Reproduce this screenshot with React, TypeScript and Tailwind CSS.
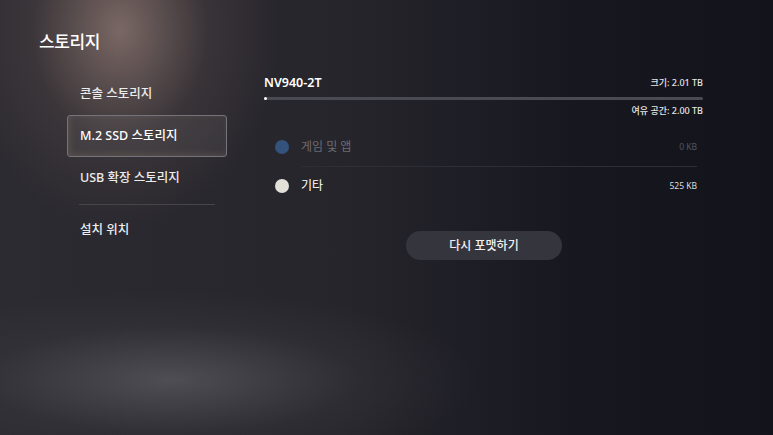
import React from "react";

const menu = [
  { label: "콘솔 스토리지", active: false },
  { label: "M.2 SSD 스토리지", active: true },
  { label: "USB 확장 스토리지", active: false },
];

const rows = [
  { label: "게임 및 앱", size: "0 KB", dot: "bg-[#34527c]", dim: true },
  { label: "기타", size: "525 KB", dot: "bg-[#e3e0da]", dim: false },
];

export default function App() {
  return (
    <div
      className="relative w-[773px] h-[435px] overflow-hidden bg-[#15151f] text-white"
      style={{ fontFamily: '"Noto Sans", "Noto Sans CJK KR", sans-serif' }}
    >
      {/* background lights */}
      <div className="absolute inset-0 bg-[linear-gradient(90deg,#2c2b31_0%,#26252c_45%,#17171f_75%,#13131c_100%)]" />
      <div className="absolute -top-[170px] -left-[40px] w-[320px] h-[400px] rounded-full bg-[radial-gradient(closest-side,rgba(175,145,135,0.6),rgba(100,82,80,0.28)_55%,rgba(0,0,0,0))]" />
      <div className="absolute top-[290px] -left-[140px] w-[620px] h-[180px] rounded-full bg-[radial-gradient(closest-side,rgba(115,115,122,0.5),rgba(72,70,78,0.22)_60%,rgba(0,0,0,0))]" />

      <div className="relative">
        <h1 className="pl-[39px] pt-[30px] text-[17px] leading-[24px] font-medium tracking-tight">
          스토리지
        </h1>

        <div className="flex pt-[19px]">
          {/* left menu */}
          <div className="ml-[67px] w-[160px] flex flex-col">
            {menu.map((m) => (
              <div
                key={m.label}
                className={
                  m.active
                    ? "h-[42px] flex items-center pl-[12px] rounded-[3px] border border-[#74727a] bg-[rgba(255,255,255,0.06)] shadow-[inset_2px_-2px_6px_rgba(200,160,130,0.18)] text-[12.5px] font-medium"
                    : "h-[42px] flex items-center pl-[13px] text-[12.5px] font-medium text-[#ececec]"
                }
              >
                {m.label}
              </div>
            ))}
            <div className="mt-[5px] mx-[12px] h-px bg-[#46454c]" />
            <div className="h-[50px] flex items-center pl-[13px] text-[12.5px] font-medium text-[#ececec]">
              설치 위치
            </div>
          </div>

          {/* right panel */}
          <div className="ml-[37px] w-[439px] flex flex-col">
            <div className="flex items-center justify-between h-[20px]">
              <span className="text-[12.5px] font-semibold">NV940-2T</span>
              <span className="text-[9px] font-medium text-[#e8e8e8]">크기: 2.01 TB</span>
            </div>
            <div className="relative mt-[4px] h-[3px] rounded-full bg-[#4a4a53]">
              <div className="absolute left-0 top-0 h-[3px] w-[3px] rounded-full bg-white" />
            </div>
            <div className="flex justify-end mt-[4px] h-[14px] items-center text-[9px] font-medium text-[#e8e8e8]">
              여유 공간: 2.00 TB
            </div>

            <div className="mt-[10px] pl-[11px] pr-[6px]">
              {rows.map((r, i) => (
                <div key={r.label}>
                  {i > 0 && <div className="ml-[26px] h-px bg-[#2e2e37]" />}
                  <div className="h-[38px] flex items-center">
                    <span className={`w-[14px] h-[14px] rounded-full ${r.dot}`} />
                    <span
                      className={
                        r.dim
                          ? "ml-[12px] text-[12px] text-[#6c6c72]"
                          : "ml-[12px] text-[12px] text-white"
                      }
                    >
                      {r.label}
                    </span>
                    <span
                      className={
                        r.dim
                          ? "ml-auto text-[8.5px] text-[#56565c]"
                          : "ml-auto text-[8.5px] text-[#dcdcdc]"
                      }
                    >
                      {r.size}
                    </span>
                  </div>
                </div>
              ))}
            </div>

            <div className="flex justify-center mt-[26px]">
              <button className="ml-[1px] w-[156px] h-[29px] rounded-full bg-[#35353d] text-[12px] font-medium text-[#f0f0f0]">
                다시 포맷하기
              </button>
            </div>
          </div>
        </div>
      </div>
    </div>
  );
}
